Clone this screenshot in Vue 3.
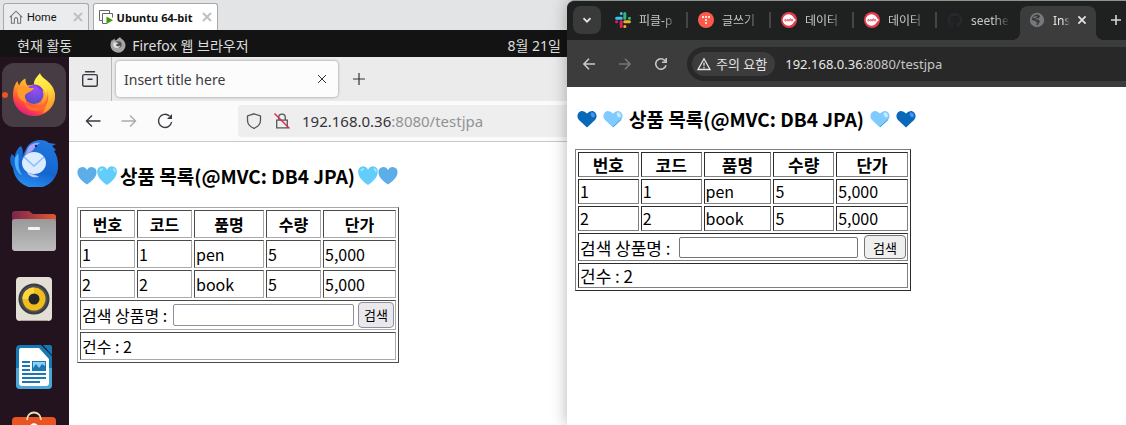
<template>
  <div class="desktop">
    <section class="vm-window">
      <nav class="vm-tabs">
        <div class="vm-tab">
          <svg class="icon-14" viewBox="0 0 14 14" fill="none" stroke="#777" stroke-width="1.1">
            <path d="M.7 7.4 7 1.2l6.3 6.2M2.4 6v7.3h3V9.2a1.6 1.6 0 0 1 3.2 0v4.1h3V6"></path>
          </svg>
          <a href="#" class="vm-link">Home</a>
          <button class="vm-close" aria-label="Close Home">
            <svg viewBox="0 0 10 10" stroke="#c0c0c0" stroke-width="2"><path d="m1 1 8 8M9 1 1 9"></path></svg>
          </button>
        </div>
        <div class="vm-tab vm-tab-active">
          <svg class="icon-14" viewBox="0 0 14 14">
            <path d="M3.5 10.5h-3V.5h10v2.500" fill="none" stroke="#666"></path>
            <path d="M8 13.500H3.500v-10h10v4" fill="none" stroke="#666"></path>
            <path d="m7.500 6.500 6.500 3.700-6.500 3.700z" fill="#3f9b0b"></path>
          </svg>
          <a href="#" class="vm-link">Ubuntu 64-bit</a>
          <button class="vm-close" aria-label="Close Ubuntu 64-bit">
            <svg viewBox="0 0 10 10" stroke="#c0c0c0" stroke-width="2"><path d="m1 1 8 8M9 1 1 9"></path></svg>
          </button>
        </div>
      </nav>

      <header class="gnome-bar">
        <button class="gnome-btn">현재 활동</button>
        <button class="gnome-btn gnome-app">
          <svg class="icon-16" viewBox="0 0 16 16">
            <path d="M8 1.500c1-.2 1.300-1 2-1.500.2 1.500 5.500 3 5.500 8.200A7.500 7.500 0 0 1 .5 8.300C.5 5.500 1.300 4 2 2.500c.4.400.5.800.600 1.300C3.300 2.500 4 1.700 4.500 1.500c0 1 .5 1.800 1.500 2.100z" fill="#a5a5a5"></path>
            <circle cx="8.300" cy="7.600" r="3.400" fill="#555"></circle>
            <path d="M3.500 5.500c2-.8 3 .2 5 .2-1 1.300-2 1-2.500 2.500.5 1.300 3 1.500 4.500.5-1 3-6 3.500-7.500-.5z" fill="#ddd"></path>
          </svg>
          <span>Firefox 웹 브라우저</span>
        </button>
        <button class="gnome-btn gnome-clock">8월 21일</button>
      </header>

      <div class="gnome-body">
        <aside class="dock">
          <button class="dock-item dock-item-active" aria-label="Firefox">
            <svg viewBox="0 0 48 48">
              <defs>
                <linearGradient id="foxBody" x1=".85" y1=".1" x2=".3" y2="1">
                  <stop offset="0" stop-color="#ffe03f"></stop>
                  <stop offset=".45" stop-color="#ff9a26"></stop>
                  <stop offset=".75" stop-color="#ff4a3e"></stop>
                  <stop offset="1" stop-color="#e31587"></stop>
                </linearGradient>
                <linearGradient id="foxTail" x1=".3" y1="0" x2=".7" y2="1">
                  <stop offset="0" stop-color="#fff44f"></stop>
                  <stop offset=".5" stop-color="#ffdb3a"></stop>
                  <stop offset="1" stop-color="#ff8a2a"></stop>
                </linearGradient>
                <radialGradient id="foxGlobe" cx=".6" cy=".2" r=".9">
                  <stop offset="0" stop-color="#a14bf5"></stop>
                  <stop offset="1" stop-color="#4a4bc4"></stop>
                </radialGradient>
              </defs>
              <path d="M3 25c0-6 1-11 4.500-15 .5 2 .8 3 1.500 4.500C10.500 11 13 8.500 15.500 7.500c-.2 3 .5 5 2 7 6-1 14-2 19-2C42 15 45 20 45 25a21 20 0 0 1-42 0z" fill="url(#foxBody)"></path>
              <path d="M30 2c1 6 14 8 15 22 0 9-5 15-12 18 3-5 5-10 4-16-1-7-6-9-13-13 0-5 3-7 6-11z" fill="url(#foxTail)"></path>
              <path d="M37 18c2 8-1 15-8 17-6 2-12 0-15-5 1 7 6 10 12 10 9 0 15-9 11-22z" fill="#ff6a2f"></path>
              <circle cx="24" cy="23.500" r="9.500" fill="url(#foxGlobe)"></circle>
              <path d="M8 17c4-3 8-2 12 0h4c-1 3-5 3.500-8 6-2 2-1 6 1 9-7-2-11-8-9-15z" fill="#ff9a2b"></path>
              <path d="M22 14.500c5-2 10 1 11.500 5.500-3-1-5-2-6-4-1-1-3-1.500-5.500-1.500z" fill="#7a3be0"></path>
            </svg>
          </button>
          <button class="dock-item" aria-label="Thunderbird">
            <svg viewBox="0 0 48 48">
              <defs>
                <linearGradient id="bird" x1=".6" y1="0" x2=".3" y2="1">
                  <stop offset="0" stop-color="#1f77dd"></stop>
                  <stop offset=".6" stop-color="#1565cf"></stop>
                  <stop offset="1" stop-color="#2a93f2"></stop>
                </linearGradient>
              </defs>
              <path d="M17 8C22 0 34-1 39 4l7 1-4 2 4 4-2 1c3 4 4 9 4 14a22 21 0 0 1-45 3C0 25-1 19 2 15l3 3c0-5 3-9 6-11 3 5 2 8 1 11z" fill="url(#bird)"></path>
              <path d="M17 11c2-6 8-8 13-7-4 2-5 5-8 8-3 2-6 2-8 6z" fill="#a9a0fa"></path>
              <path d="M8 14c2 7-2 13 4 22C6 34 4 25 5 19z" fill="#4db3ff"></path>
              <ellipse cx="24" cy="24" rx="12" ry="11" fill="#dcecff"></ellipse>
              <path d="m14 18 10 9 10-9" fill="none" stroke="#8cbdf2" stroke-width="1.500"></path>
              <path d="M17 33c3 2 8 2 12 5-6 1-11-1-12-5z" fill="#c5c8ff"></path>
              <circle cx="26" cy="7" r="1.200" fill="#12335f"></circle>
            </svg>
          </button>
          <button class="dock-item" aria-label="Files">
            <svg viewBox="0 0 48 48">
              <defs>
                <linearGradient id="folderBack"><stop offset="0" stop-color="#7b2550"></stop><stop offset="1" stop-color="#e2582b"></stop></linearGradient>
                <linearGradient id="folder" x2="0" y2="1"><stop offset="0" stop-color="#999"></stop><stop offset="1" stop-color="#bdbdbd"></stop></linearGradient>
              </defs>
              <path d="M2 7q0-3 3-3h14l4 3h20q3 0 3 3v12H2z" fill="url(#folderBack)"></path>
              <rect x="2" y="12" width="44" height="32" rx="3" fill="url(#folder)"></rect>
              <rect x="18" y="20" width="12" height="3" rx="1" fill="#f5f5f5"></rect>
            </svg>
          </button>
          <button class="dock-item" aria-label="Rhythmbox">
            <svg viewBox="0 0 48 48">
              <rect x="6" y="2" width="36" height="44" rx="4" fill="#e4dfd5"></rect>
              <path d="M10 45.500h28" stroke="#aaa69c"></path>
              <circle cx="24" cy="24" r="15.500" fill="#3a3c42"></circle>
              <circle cx="24" cy="24" r="13.500" fill="#4e5056"></circle>
              <circle cx="24" cy="24" r="11.500" fill="#f0bd1b"></circle>
              <path d="M24 12.500A11.500 11.500 0 0 0 12.500 24L24 24z" fill="#ffd53f"></path>
              <circle cx="24" cy="24" r="5.500" fill="#24262b"></circle>
            </svg>
          </button>
          <button class="dock-item" aria-label="Writer">
            <svg viewBox="0 0 48 48">
              <path d="M10 2h21l11 11v29q0 4-4 4H10q-4 0-4-4V6q0-4 4-4z" fill="#1579b3"></path>
              <path d="M6 25h36v17q0 4-4 4H10q-4 0-4-4z" fill="#4aa7d8"></path>
              <path d="M11 5h18l10 11v24q0 3-3 3H12q-3 0-3-3V7q0-2 2-2z" fill="#fff"></path>
              <path d="M33 2h7q2 0 2 2v8z" fill="#1579b3"></path>
              <g fill="#1b78b5">
                <path d="M12 18h8v2h-8zM12 22h8v2h-8zM12 26h8v2h-8zM12 30h24v2H12zM12 34h24v2H12zM12 38h18v2H12z"></path>
                <rect x="22" y="18" width="14" height="10"></rect>
              </g>
              <path d="M23 19h12v4l-3-2-3 4-3-4-3 4z" fill="#8fd0f4"></path>
            </svg>
          </button>
          <button class="dock-item" aria-label="Software">
            <svg viewBox="0 0 48 48">
              <rect x="2" y="6" width="44" height="40" rx="4" fill="#e95420"></rect>
              <path d="M17 9c0-10 14-10 14 0" fill="none" stroke="#f4dcb0" stroke-width="1.800"></path>
              <path d="M20 16c0-5 8-5 8 0z" fill="#fff"></path>
            </svg>
          </button>
        </aside>

        <div class="firefox">
          <div class="ff-tabs">
            <button class="ff-library" aria-label="Library">
              <svg class="icon-16" viewBox="0 0 16 16" fill="none" stroke="#3a3a42" stroke-width="1.400" stroke-linecap="round">
                <path d="M3.500.8h9M2.200 3.600h11.600q1.500 0 1.500 1.500v8.600q0 1.500-1.500 1.500H2.200q-1.500 0-1.500-1.500V5.100q0-1.500 1.500-1.500zM6 8.300h4"></path>
              </svg>
            </button>
            <div class="ff-tab">
              <span>Insert title here</span>
              <button class="ff-btn" aria-label="Close tab">
                <svg class="icon-8" viewBox="0 0 8 8" stroke="#333" stroke-width="1"><path d="m0 0 8 8M8 0 0 8"></path></svg>
              </button>
            </div>
            <button class="ff-btn ff-new" aria-label="New tab">
              <svg class="icon-12" viewBox="0 0 12 12" stroke="#333" stroke-width="1.200"><path d="M6 0v12M0 6h12"></path></svg>
            </button>
          </div>
          <div class="ff-toolbar">
            <button class="ff-btn" aria-label="Back">
              <svg class="icon-16" viewBox="0 0 16 16" fill="none" stroke="#3a3a42" stroke-width="1.400"><path d="M15.500 8H2M7 2.500 1.500 8 7 13.500"></path></svg>
            </button>
            <button class="ff-btn" aria-label="Forward">
              <svg class="icon-16" viewBox="0 0 16 16" fill="none" stroke="#aaa" stroke-width="1.400"><path d="M.5 8H14M9 2.500 14.500 8 9 13.500"></path></svg>
            </button>
            <button class="ff-btn" aria-label="Reload">
              <svg class="icon-16" viewBox="0 0 16 16" fill="none" stroke="#3a3a42" stroke-width="1.400">
                <path d="M12.500 3A6.600 6.600 0 1 0 14.600 9"></path><path d="M15 1v5h-5z" fill="#3a3a42" stroke="none"></path>
              </svg>
            </button>
            <div class="ff-url">
              <svg class="icon-16" viewBox="0 0 16 16" fill="none" stroke="#55555c" stroke-width="1.300">
                <path d="M8 .8 14.500 3v4.200c0 3.500-2.500 6.500-6.500 8.200-4-1.700-6.500-4.700-6.500-8.200V3z"></path>
              </svg>
              <svg class="icon-16" viewBox="0 0 16 16" fill="none" stroke="#55555c" stroke-width="1.300">
                <path d="M4.700 7V4.500a3.300 3.300 0 0 1 6.600 0V7M2.700 7.200h10.600v7.600H2.700z"></path>
                <path d="m.5.5 15 15" stroke="#e22850" stroke-width="1.400"></path>
              </svg>
              <span class="ff-address">192.168.0.36<span class="ff-path">:8080/testjpa</span></span>
            </div>
          </div>
          <main class="page page-ubuntu">
            <h3 class="title">
              <svg class="heart" viewBox="0 0 20 20"><path d="M10 18.500C4 14.500.5 10.500.5 6.500A5 5 0 0 1 10 4a5 5 0 0 1 9.500 2.500c0 4-3.500 8-9.500 12z" fill="#5dade8"></path></svg>
              <svg class="heart" viewBox="0 0 20 20"><path d="M10 19C4 15 .3 10.500.3 6.500A5 5 0 0 1 10 4a5 5 0 0 1 9.700 2.500c0 4-3.700 8.500-9.700 12.500z" fill="#63cdfa"></path><path d="M3 5q1-2 3-2M16 3q2 .5 2 3" stroke="#a9e9ff" stroke-width="1.500" fill="none"></path></svg>
              <span>상품 목록(@MVC: DB4 JPA)</span>
              <svg class="heart" viewBox="0 0 20 20"><path d="M10 19C4 15 .3 10.500.3 6.500A5 5 0 0 1 10 4a5 5 0 0 1 9.700 2.500c0 4-3.700 8.500-9.700 12.500z" fill="#63cdfa"></path><path d="M3 5q1-2 3-2M16 3q2 .5 2 3" stroke="#a9e9ff" stroke-width="1.500" fill="none"></path></svg>
              <svg class="heart" viewBox="0 0 20 20"><path d="M10 18.500C4 14.500.5 10.500.5 6.500A5 5 0 0 1 10 4a5 5 0 0 1 9.500 2.500c0 4-3.500 8-9.500 12z" fill="#5dade8"></path></svg>
            </h3>
            <table class="goods">
              <thead>
                <tr><th v-for="head in heads" :key="head" scope="col">{{ head }}</th></tr>
              </thead>
              <tbody>
                <tr v-for="item in items" :key="item.no">
                  <td>{{ item.no }}</td>
                  <td>{{ item.code }}</td>
                  <td>{{ item.name }}</td>
                  <td>{{ item.count }}</td>
                  <td>{{ item.price }}</td>
                </tr>
                <tr>
                  <td colspan="5">
                    <form class="search" @submit.prevent>
                      <label for="ubuntuSearch">검색 상품명 :</label>
                      <input id="ubuntuSearch" v-model="ubuntuKeyword" type="text" />
                      <button type="submit">검색</button>
                    </form>
                  </td>
                </tr>
                <tr><td colspan="5" class="total">건수 : {{ items.length }}</td></tr>
              </tbody>
            </table>
          </main>
        </div>
      </div>
    </section>

    <section class="chrome-window">
      <div class="cr-tabs">
        <button class="cr-menu" aria-label="Search tabs">
          <svg class="icon-8" viewBox="0 0 8 8" fill="none" stroke="#e3e3e3" stroke-width="1.800"><path d="m.5 2.200 3.500 3.500 3.500-3.500"></path></svg>
        </button>
        <div v-for="(tab, index) in chromeTabs" :key="index" class="cr-tab">
          <svg v-if="tab.icon === 'slack'" class="icon-16" viewBox="0 0 16 16" fill="none" stroke-width="3" stroke-linecap="round">
            <path d="M6.200 1.600h.1M1.600 6.200h4.700" stroke="#36c5f0"></path>
            <path d="M14.400 6.200h.1M9.800 1.600v4.600" stroke="#2eb67d"></path>
            <path d="M9.800 14.400h.1M9.800 9.800h4.600" stroke="#ecb22e"></path>
            <path d="M1.600 9.800h.1M6.200 9.800v4.600" stroke="#e01e5a"></path>
          </svg>
          <svg v-else-if="tab.icon === 'tistory'" class="icon-16" viewBox="0 0 16 16">
            <circle cx="8" cy="8" r="8" fill="#ff5a4a"></circle>
            <g fill="#fff"><circle cx="5" cy="5" r="1.100"></circle><circle cx="8" cy="5" r="1.100"></circle><circle cx="11" cy="5" r="1.100"></circle><circle cx="8" cy="8" r="1.100"></circle><circle cx="8" cy="11" r="1.100"></circle></g>
          </svg>
          <svg v-else-if="tab.icon === 'cafe'" class="icon-16" viewBox="0 0 16 16">
            <circle cx="8" cy="8" r="8" fill="#e33d4b"></circle>
            <circle cx="7.500" cy="8" r="5.800" fill="#fff"></circle>
            <circle cx="13" cy="8" r="1.600" fill="#fff"></circle>
            <g fill="none" stroke="#e33d4b" stroke-width=".9">
              <circle cx="4.500" cy="8.200" r=".8"></circle>
              <circle cx="6.800" cy="8.200" r=".8"></circle>
              <path d="M9.800 6.500q-1 0-1 1v1.800M8.200 8h1.500"></path>
              <circle cx="11" cy="8.200" r=".8"></circle>
            </g>
          </svg>
          <svg v-else class="icon-16" viewBox="0 0 16 16" fill="#24292f">
            <path d="M8 .5a7.500 7.500 0 0 0-2.400 14.600c.4.100.5-.2.500-.4v-1.500c-2.100.5-2.500-.9-2.500-.9-.4-.9-.9-1.100-.9-1.100-.7-.5 0-.5 0-.5.8.1 1.200.8 1.200.8.7 1.200 1.800.8 2.200.6.100-.5.300-.8.500-1-1.700-.2-3.400-.8-3.400-3.700 0-.8.300-1.500.8-2-.1-.2-.4-1 .1-2 0 0 .6-.2 2 .8a7 7 0 0 1 3.800 0c1.400-1 2-.8 2-.8.5 1 .2 1.800.1 2 .5.500.8 1.200.8 2 0 2.900-1.700 3.500-3.400 3.700.300.200.500.700.500 1.400v2.200c0 .2.100.5.500.4A7.500 7.500 0 0 0 8 .5z"></path>
          </svg>
          <a href="#" class="cr-title">{{ tab.title }}</a>
        </div>
        <div class="cr-tab cr-tab-active">
          <svg class="icon-16" viewBox="0 0 16 16">
            <circle cx="8" cy="8" r="7.200" fill="#74797d"></circle>
            <path d="M8 2.500c2 0 3 1 3 2.200L9.500 6.500 8 6 6.500 7.500h3l1.500 2-1 1.500-1.500 2.500-1-.5.500-2.500L6 9 2.800 8C2.800 5 5 2.500 8 2.500z" fill="#3c3c3c"></path>
            <path d="m5 4.500 3-.5-1 2H4z" fill="#74797d"></path>
          </svg>
          <a href="#" class="cr-title">Ins</a>
          <button class="cr-btn" aria-label="Close tab">
            <svg class="icon-8" viewBox="0 0 8 8" stroke="#e3e3e3" stroke-width="1.800"><path d="m.4.4 7.200 7.200M7.600.4.400 7.600"></path></svg>
          </button>
        </div>
        <button class="cr-btn cr-new" aria-label="New tab">
          <svg class="icon-10" viewBox="0 0 10 10" stroke="#d6d6d6" stroke-width="1.600"><path d="M5 0v10M0 5h10"></path></svg>
        </button>
      </div>
      <div class="cr-toolbar">
        <button class="cr-btn" aria-label="Back">
          <svg class="icon-12" viewBox="0 0 12 12" fill="none" stroke="#c7c7c7" stroke-width="1.600"><path d="M12 6H1M6 .7.900 6 6 11.300"></path></svg>
        </button>
        <button class="cr-btn" aria-label="Forward">
          <svg class="icon-12" viewBox="0 0 12 12" fill="none" stroke="#767676" stroke-width="1.600"><path d="M0 6h11M6 .7 11.100 6 6 11.300"></path></svg>
        </button>
        <button class="cr-btn" aria-label="Reload">
          <svg class="icon-12" viewBox="0 0 12 12" fill="none" stroke="#c7c7c7" stroke-width="1.600"><path d="M11 7.300A5.200 5.200 0 1 1 10.200 3M11.200 0v4.200H7"></path></svg>
        </button>
        <div class="cr-url">
          <button class="cr-warning">
            <svg class="icon-14" viewBox="0 0 14 14" fill="none" stroke="#e3e3e3" stroke-width="1.300"><path d="M7 1.800 13 12.500H1zM7 5.500v3.200M7 9.800v1.400"></path></svg>
            <span>주의 요함</span>
          </button>
          <span class="cr-address">192.168.0.36<span class="cr-path">:8080/testjpa</span></span>
        </div>
      </div>
      <main class="page page-windows">
        <h3 class="title">
          <svg class="heart" viewBox="0 0 20 20"><path d="M10 18.500 2 11C-1.500 7 1.500 2 5 2q3 0 5 2.500Q12 2 15 2c3.500 0 6.500 5 3 9z" fill="#0869b8"></path><path d="M14 3.500c3-.5 4.500 2 3.500 4.500-2 1-4.500-1-3.500-4.500z" fill="#4c91f3"></path></svg>
          <svg class="heart" viewBox="0 0 20 20"><path d="M10 18.500 2 11C-1.500 7 1.500 2 5 2q3 0 5 2.500Q12 2 15 2c3.500 0 6.500 5 3 9z" fill="#7fcbff"></path><path d="M14 3.500c3-.5 4.500 2 3.500 4.500-2 1-4.500-1-3.500-4.500z" fill="#c5ecff"></path><path d="M10 18 18 10.500" stroke="#3d9fd3"></path></svg>
          <span>상품 목록(@MVC: DB4 JPA)</span>
          <svg class="heart" viewBox="0 0 20 20"><path d="M10 18.500 2 11C-1.500 7 1.500 2 5 2q3 0 5 2.500Q12 2 15 2c3.500 0 6.500 5 3 9z" fill="#7fcbff"></path><path d="M14 3.500c3-.5 4.500 2 3.500 4.500-2 1-4.500-1-3.500-4.500z" fill="#c5ecff"></path><path d="M10 18 18 10.500" stroke="#3d9fd3"></path></svg>
          <svg class="heart" viewBox="0 0 20 20"><path d="M10 18.500 2 11C-1.500 7 1.500 2 5 2q3 0 5 2.500Q12 2 15 2c3.500 0 6.500 5 3 9z" fill="#0869b8"></path><path d="M14 3.500c3-.5 4.500 2 3.500 4.500-2 1-4.500-1-3.500-4.500z" fill="#4c91f3"></path></svg>
        </h3>
        <table class="goods">
          <thead>
            <tr><th v-for="head in heads" :key="head" scope="col">{{ head }}</th></tr>
          </thead>
          <tbody>
            <tr v-for="item in items" :key="item.no">
              <td>{{ item.no }}</td>
              <td>{{ item.code }}</td>
              <td>{{ item.name }}</td>
              <td>{{ item.count }}</td>
              <td>{{ item.price }}</td>
            </tr>
            <tr>
              <td colspan="5">
                <form class="search" @submit.prevent>
                  <label for="windowsSearch">검색 상품명 :</label>
                  <input id="windowsSearch" v-model="windowsKeyword" type="text" />
                  <button type="submit">검색</button>
                </form>
              </td>
            </tr>
            <tr><td colspan="5" class="total">건수 : {{ items.length }}</td></tr>
          </tbody>
        </table>
      </main>
    </section>
  </div>
</template>

<script setup>
import { ref } from 'vue'

const heads = ['번호', '코드', '품명', '수량', '단가']

const items = [
  { no: 1, code: 1, name: 'pen', count: 5, price: '5,000' },
  { no: 2, code: 2, name: 'book', count: 5, price: '5,000' }
]

const chromeTabs = [
  { icon: 'slack', title: '피클-p' },
  { icon: 'tistory', title: '글쓰기' },
  { icon: 'cafe', title: '데이터' },
  { icon: 'cafe', title: '데이터' },
  { icon: 'github', title: 'seethe' }
]

const ubuntuKeyword = ref('')
const windowsKeyword = ref('')
</script>

<style>
body {
  margin: 0;
}
</style>

<style scoped>
* {
  box-sizing: border-box;
}

.desktop {
  display: grid;
  grid-template-columns: minmax(0, 567fr) minmax(0, 559fr);
  height: 100vh;
  overflow: hidden;
  background: #e3e4e6;
  font-family: "Noto Sans", "Noto Sans CJK KR", sans-serif;
}

button {
  padding: 0;
  border: none;
  background: none;
  color: inherit;
  font: inherit;
}

a {
  color: inherit;
  text-decoration: none;
}

svg {
  display: block;
  flex-shrink: 0;
}

.icon-8 {
  width: 8px;
  height: 8px;
}

.icon-10 {
  width: 10px;
  height: 10px;
}

.icon-12 {
  width: 12px;
  height: 12px;
}

.icon-14 {
  width: 14px;
  height: 14px;
}

.icon-16 {
  width: 16px;
  height: 16px;
}

/* VM 창 */
.vm-window {
  display: flex;
  flex-direction: column;
  min-width: 0;
  min-height: 0;
}

.vm-tabs {
  display: flex;
  flex-shrink: 0;
  gap: 4px;
  height: 30px;
  padding: 3px 3px 0;
  background: #e3e4e6;
}

.vm-tab {
  display: flex;
  align-items: center;
  gap: 4px;
  padding: 0 5px;
  border: 1px solid #a8a8a8;
  border-bottom: none;
  border-radius: 3px 3px 0 0;
  background: #ebeced;
  font-family: Roboto, sans-serif;
  font-size: 11px;
  color: #111;
  white-space: nowrap;
}

.vm-tab-active {
  background: #fff;
  font-family: "Open Sans", sans-serif;
  font-weight: 700;
}

.vm-close {
  margin-left: 12px;
}

.vm-tab-active .vm-close {
  margin-left: 6px;
}

.vm-close svg {
  width: 10px;
  height: 10px;
}

.gnome-bar {
  display: flex;
  flex-shrink: 0;
  align-items: center;
  gap: 38px;
  height: 27px;
  padding: 2px 6px 0 17px;
  background: #131313;
  color: #dedede;
  font-size: 14px;
}

.gnome-btn {
  white-space: nowrap;
}

.gnome-app {
  display: flex;
  align-items: center;
  gap: 6px;
}

.gnome-clock {
  margin-left: auto;
}

.gnome-body {
  display: flex;
  flex: 1;
  min-height: 0;
}

/* 독 */
.dock {
  display: flex;
  flex-direction: column;
  flex-shrink: 0;
  gap: 4px;
  padding: 6px 3px 0 2px;
  overflow: hidden;
  background: #23131e;
}

.dock-item {
  position: relative;
  display: flex;
  flex-shrink: 0;
  align-items: center;
  justify-content: center;
  width: 64px;
  height: 64px;
  border-radius: 12px;
}

.dock-item svg {
  width: 48px;
  height: 48px;
}

.dock-item-active {
  background: #473b44;
}

.dock-item-active::before {
  content: '';
  position: absolute;
  left: 0;
  width: 6px;
  height: 6px;
  border-radius: 50%;
  background: #e95420;
}

/* Firefox */
.firefox {
  display: flex;
  flex: 1;
  flex-direction: column;
  min-width: 0;
  background: #fff;
}

.ff-tabs {
  display: flex;
  flex-shrink: 0;
  height: 44px;
  background: #ebebeb;
}

.ff-library {
  display: flex;
  align-items: center;
  justify-content: center;
  width: 43px;
  border-right: 1px solid #b8b8b8;
}

.ff-tab {
  display: flex;
  align-items: center;
  justify-content: space-between;
  width: 222px;
  margin: 4px 15px 4px 4px;
  padding: 0 12px 0 8px;
  border-radius: 4px;
  background: #fcfcfc;
  box-shadow: 0 0 3px rgba(0, 0, 0, 0.4);
  color: #3a3a3f;
  font-size: 14px;
}

.ff-btn {
  display: flex;
  align-items: center;
}

.ff-toolbar {
  display: flex;
  flex-shrink: 0;
  align-items: center;
  gap: 20px;
  height: 41px;
  padding-left: 16px;
  border-bottom: 1px solid #c9c9c9;
  background: #fbfbfb;
}

.ff-url {
  display: flex;
  flex: 1;
  align-items: center;
  gap: 12px;
  height: 32px;
  margin-left: 45px;
  padding: 0 8px;
  border-radius: 4px 0 0 4px;
  background: #eee;
}

.ff-address {
  color: #34343a;
  font-size: 15px;
}

.ff-path {
  color: #929295;
}

/* 상품 목록 페이지 */
.page {
  flex: 1;
  padding: 0 8px;
  background: #fff;
  color: #000;
  font-family: "Noto Sans CJK KR", sans-serif;
  font-size: 16px;
}

.title {
  display: flex;
  align-items: center;
  font-size: 19px;
  line-height: 28px;
  white-space: nowrap;
}

.heart {
  width: 20px;
  height: 20px;
}

.goods {
  border: 1px solid;
  border-color: #aaa #4a4a4a #4a4a4a #aaa;
  border-spacing: 2px;
  border-collapse: separate;
}

.goods th,
.goods td {
  padding: 1px;
  border: 1px solid;
  border-color: #4a4a4a #aaa #aaa #4a4a4a;
}

.search {
  display: flex;
  align-items: center;
  gap: 4px;
  white-space: nowrap;
}

.search label {
  margin-right: 2px;
}

.search input {
  flex: 1;
  min-width: 0;
  height: 22px;
  padding: 1px 2px;
  border: 1px solid #8f8f9d;
  border-radius: 2px;
  background: #fff;
  font: inherit;
  font-size: 13px;
}

.search button {
  border: 1px solid #8f8f9d;
  border-radius: 4px;
  background: #e9e9ed;
  color: #000;
  font-size: 13px;
}

.page-ubuntu .title {
  margin: 20px 0 17px;
}

.page-ubuntu .title span {
  margin: 0 3px;
}

.page-ubuntu .goods {
  width: 322px;
  line-height: 24px;
}

.page-ubuntu th {
  width: 55px;
}

.page-ubuntu th:nth-child(3) {
  width: 70px;
}

.page-ubuntu th:nth-child(5) {
  width: 73px;
}

.page-ubuntu .search button {
  height: 26px;
  padding: 0 5px;
}

/* Chrome */
.chrome-window {
  position: relative;
  display: flex;
  flex-direction: column;
  min-width: 0;
  overflow: hidden;
  border-top: 1px solid #8d9593;
  border-radius: 8px 0 0 0;
  background: #3c3c3c;
  box-shadow: 0 0 16px rgba(0, 0, 0, 0.3);
}

.cr-tabs {
  display: flex;
  flex-shrink: 0;
  height: 39px;
  padding: 5px 0 0 6px;
  background: #1f2020;
}

.cr-menu {
  display: flex;
  align-items: center;
  justify-content: center;
  width: 28px;
  height: 28px;
  margin-right: 4px;
  border-radius: 8px;
  background: #3a3a3a;
}

.cr-tab {
  position: relative;
  display: flex;
  flex: 0 1 83px;
  align-items: center;
  gap: 8px;
  min-width: 0;
  height: 28px;
  padding: 0 10px;
  color: #c7c7c7;
  font-size: 12px;
}

.cr-tab:not(.cr-tab-active):not(:nth-child(6))::after {
  content: '';
  position: absolute;
  right: 0;
  width: 2px;
  height: 16px;
  background: #454545;
}

.cr-title {
  flex: 1;
  min-width: 0;
  overflow: hidden;
  white-space: nowrap;
  mask-image: linear-gradient(90deg, #000 60%, transparent);
}

.cr-tab-active {
  flex: 0 0 76px;
  height: 34px;
  padding: 0 12px 6px 9px;
  border-radius: 8px 8px 0 0;
  background: #3c3c3c;
  color: #e3e3e3;
}

/* 활성 탭 아래쪽 곡선 */
.cr-tab-active::before,
.cr-tab-active::after {
  content: '';
  position: absolute;
  bottom: 0;
  width: 8px;
  height: 8px;
}

.cr-tab-active::before {
  right: 100%;
  background: radial-gradient(circle at 0 0, transparent 8px, #3c3c3c 8px);
}

.cr-tab-active::after {
  left: 100%;
  background: radial-gradient(circle at 100% 0, transparent 8px, #3c3c3c 8px);
}

.cr-tab-active .cr-title {
  flex: none;
}

.cr-tab-active .cr-btn {
  margin-left: auto;
}

.cr-btn {
  display: flex;
  align-items: center;
}

.cr-new {
  height: 28px;
  margin-left: 15px;
}

.cr-toolbar {
  display: flex;
  flex-shrink: 0;
  align-items: center;
  gap: 24px;
  height: 47px;
  padding-left: 16px;
  background: #3c3c3c;
}

.cr-url {
  display: flex;
  flex: 1;
  align-items: center;
  gap: 10px;
  height: 34px;
  margin-left: -4px;
  padding-left: 5px;
  border-radius: 17px 0 0 17px;
  background: #282828;
  white-space: nowrap;
}

.cr-warning {
  display: flex;
  align-items: center;
  gap: 5px;
  height: 24px;
  padding: 0 8px 0 5px;
  border-radius: 12px;
  background: #3c3c3c;
  color: #e3e3e3;
  font-size: 13px;
}

.cr-address {
  color: #e8e8e8;
  font-size: 13px;
}

.cr-path {
  color: #c7c7c7;
}

.page-windows .title {
  gap: 6px;
  margin: 18px 0 16px 2px;
}

.page-windows .goods {
  width: 336px;
  border-color: #808080 #2c2c2c #2c2c2c #808080;
  line-height: 21px;
}

.page-windows .goods th,
.page-windows .goods td {
  border-color: #2c2c2c #808080 #808080 #2c2c2c;
}

.page-windows th {
  width: 61px;
}

.page-windows th:nth-child(3) {
  width: 68px;
}

.page-windows th:nth-child(5) {
  width: 72px;
}

.page-windows th,
.page-windows .search,
.page-windows .total {
  font-size: 17px;
}

.page-windows .search {
  gap: 6px;
}

.page-windows .search input {
  height: 21px;
  border-color: #767676;
}

.page-windows .search button {
  height: 24px;
  padding: 0 8px;
  border-color: #767676;
  background: #efefef;
}
</style>
